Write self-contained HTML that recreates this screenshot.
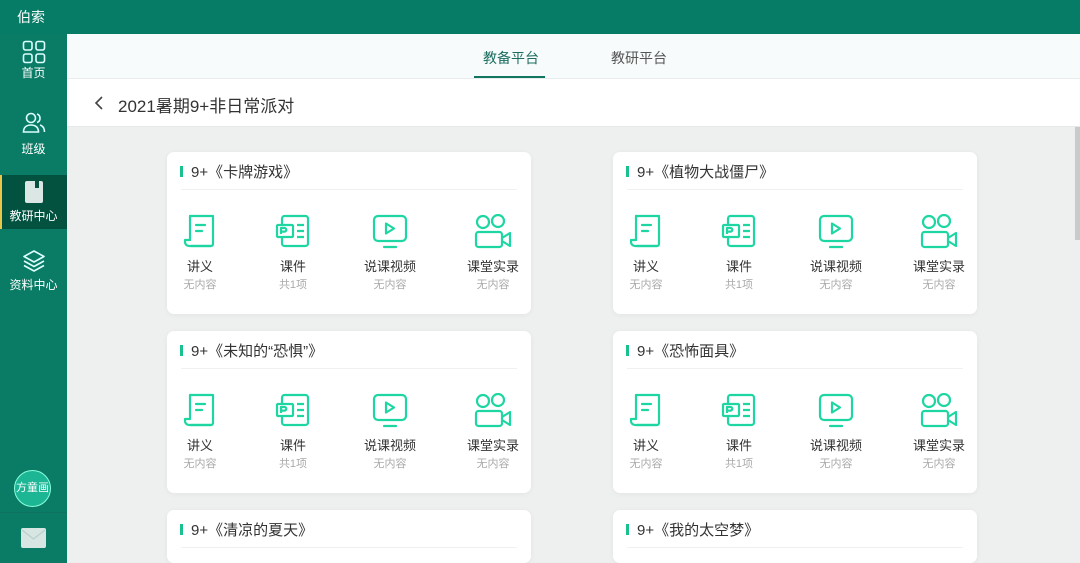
<!DOCTYPE html>
<html style="width:1080px;height:563px;overflow:hidden"><head><meta charset="utf-8"><style>
*{margin:0;padding:0;box-sizing:border-box}
body{width:1080px;height:563px;overflow:hidden;position:relative;background:#eef0f0;font-family:"Liberation Sans","Noto Sans CJK SC",sans-serif;}
.top{position:absolute;left:0;top:0;width:1080px;height:34px;background:#067b65;color:#fff;font-size:14px;line-height:34px;padding-left:17px}
.side{position:absolute;left:0;top:34px;width:67px;height:529px;background:#0a7c66}
.si{position:absolute;left:0;width:67px;text-align:center;color:#fff;font-size:12px}
.tabs{position:absolute;left:67px;top:34px;width:1013px;height:45px;background:#f7fbfc;border-bottom:1px solid #e8eced}
.tab{position:absolute;top:14px;font-size:14px;color:#555}
.hdr{position:absolute;left:67px;top:79px;width:1013px;height:48px;background:#fff;border-bottom:1px solid #e6e9ea}
.card{position:absolute;width:364px;height:162px;background:#fff;border-radius:7px;box-shadow:0 1px 6px rgba(0,0,0,.05)}
.ct{position:absolute;left:24px;top:9px;font-size:15px;color:#333}
.bar{position:absolute;left:13px;top:14px;width:3px;height:11px;background:#1bc08f}
.dv{position:absolute;left:14px;right:14px;top:37px;height:1px;background:#eff1f1}
.it{position:absolute;top:62px;width:80px;margin-left:-40px;text-align:center}
.it svg{display:block;margin:0 auto;height:36px}
.l1{font-size:13px;color:#333;margin-top:8px;line-height:17px}
.l2{font-size:11px;color:#aaa;line-height:16px;margin-top:2px}
</style></head><body>
<div class="top">伯索</div>
<div class="side">
 <div class="si" style="top:6px"><svg width="24" height="24" viewBox="0 0 24 24" fill="none" stroke="#dff" stroke-width="1.6"><rect x="1.5" y="1.5" width="8.5" height="8.5" rx="2"/><rect x="14" y="1.5" width="8.5" height="8.5" rx="2"/><rect x="1.5" y="14" width="8.5" height="8.5" rx="2"/><rect x="14" y="14" width="8.5" height="8.5" rx="2"/></svg><div style="margin-top:-3px">首页</div></div>
 <div class="si" style="top:78px"><svg width="24" height="22" viewBox="0 0 24 22" fill="none" stroke="#dff" stroke-width="1.6"><circle cx="9" cy="6" r="4.5"/><path d="M1.5 20c0-5 3.5-7 7.5-7s7.5 2 7.5 7z"/><path d="M15 2a4.5 4.5 0 0 1 0 8.5M18 13c3 1 4.5 3 4.5 7"/></svg><div style="margin-top:3px">班级</div></div>
 <div style="position:absolute;left:0;top:141px;width:67px;height:54px;background:#03513f;border-left:2px solid #e8c64a"></div>
 <div class="si" style="top:146px"><svg width="20" height="24" viewBox="0 0 20 24"><rect x="1" y="1" width="18" height="22" rx="2" fill="#dbe7e5"/><rect x="11" y="1" width="4" height="7" fill="#03513f"/></svg><div>教研中心</div></div>
 <div class="si" style="top:215px"><svg width="24" height="24" viewBox="0 0 24 24" fill="none" stroke="#dff" stroke-width="1.6" stroke-linejoin="round"><path d="M12 2l10 5.5-10 5.5-10-5.5z"/><path d="M2 12l10 5.5 10-5.5"/><path d="M2 16.5l10 5.5 10-5.5"/></svg><div>资料中心</div></div>
 <div style="position:absolute;left:14px;top:436px;width:37px;height:37px;border-radius:50%;background:#1db695;border:1px solid #8fd;color:#fff;font-size:11px;line-height:35px;text-align:center">方童画</div>
 <div style="position:absolute;left:0;top:478px;width:67px;height:1px;background:#0f7160"></div>
 <div style="position:absolute;left:21px;top:494px;width:25px;height:20px;background:#d7e6e3;border-radius:2px"><svg width="25" height="20" viewBox="0 0 25 20"><path d="M1 2l11.5 9L24 2" fill="none" stroke="#b9cfcb" stroke-width="1.2"/></svg></div>
</div>
<div class="tabs">
 <div class="tab" style="left:416px;color:#1d6e60">教备平台</div>
 <div style="position:absolute;left:407px;top:42px;width:71px;height:2px;background:#127560"></div>
 <div class="tab" style="left:544px">教研平台</div>
</div>
<div class="hdr">
 <svg style="position:absolute;left:27px;top:17px" width="10" height="14" viewBox="0 0 10 14"><path d="M8 1L2 7l6 6" fill="none" stroke="#444" stroke-width="1.6"/></svg>
 <div style="position:absolute;left:51px;top:13px;font-size:17px;color:#333">2021暑期9+非日常派对</div>
</div>
<div style="position:absolute;left:1075px;top:127px;width:5px;height:113px;background:#c8cbcc"></div>

<svg width="0" height="0" style="position:absolute">
<defs>
<g id="i1" fill="none" stroke="#1ed6a2" stroke-width="2.2" stroke-linejoin="round" stroke-linecap="round"><path d="M7 2h23v28a2 2 0 0 1-2 2H8"/><path d="M7 2v24H2v2a4 4 0 0 0 4 4h22"/><path d="M13 11h9M13 17h6"/></g>
<g id="i2" fill="none" stroke="#1ed6a2" stroke-width="2.2" stroke-linejoin="round"><rect x="7" y="2" width="26" height="30" rx="2.5"/><rect x="2" y="11" width="16" height="12" rx="1" fill="#fff"/><path d="M6 20v-6h3.5a1.8 1.8 0 0 1 0 3.6H6M22 11h7M22 17h7M22 23h7"/></g>
<g id="i3" fill="none" stroke="#1ed6a2" stroke-width="2.2" stroke-linejoin="round" stroke-linecap="round"><rect x="2" y="2" width="32" height="25" rx="4"/><path d="M14 9.5v10l8-5z"/><path d="M12 33h12"/></g>
<g id="i4" fill="none" stroke="#1ed6a2" stroke-width="2.2" stroke-linejoin="round"><circle cx="9" cy="8" r="6"/><circle cx="24" cy="7" r="6"/><rect x="2" y="18" width="26" height="15" rx="2.5"/><path d="M28 24l8-5v13l-8-5"/></g>
</defs></svg>

<div id="cards"></div>
<script>
var t=[["9+《卡牌游戏》",167,152],["9+《植物大战僵尸》",613,152],["9+《未知的“恐惧”》",167,331],["9+《恐怖面具》",613,331],["9+《清凉的夏天》",167,510],["9+《我的太空梦》",613,510]];
var it=[[33,"i1","讲义","无内容",34],[126,"i2","课件","共1项",36],[223,"i3","说课视频","无内容",36],[326,"i4","课堂实录","无内容",38]];
var h="";
t.forEach(function(c){
 var hh=c[2]>400?(563-c[2]):162;
 h+='<div class="card" style="left:'+c[1]+'px;top:'+c[2]+'px;height:'+hh+'px;overflow:hidden"><div class="bar"></div><div class="ct">'+c[0]+'</div><div class="dv"></div>';
 it.forEach(function(i){h+='<div class="it" style="left:'+i[0]+'px"><svg width="'+i[4]+'" height="36" viewBox="0 0 '+i[4]+' 36"><use href="#'+i[1]+'"/></svg><div class="l1">'+i[2]+'</div><div class="l2">'+i[3]+'</div></div>';});
 h+='</div>';
});
document.getElementById("cards").innerHTML=h;
</script>
</body></html>
